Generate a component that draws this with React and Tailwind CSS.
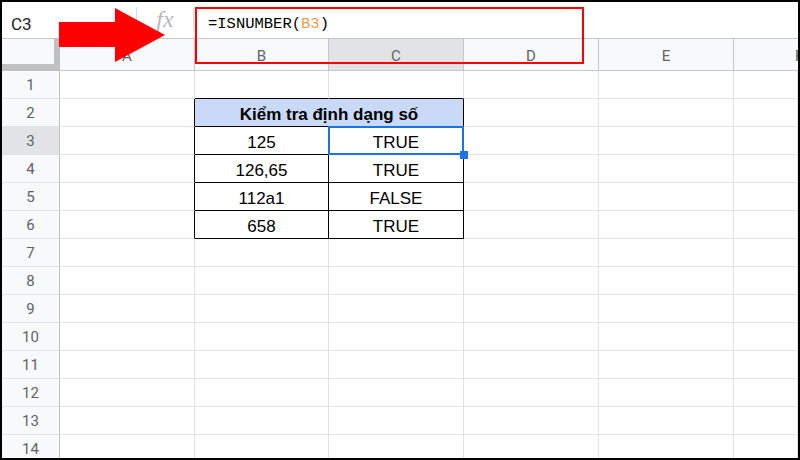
const cols = [
  { key: "A", w: "w-[135px]" },
  { key: "B", w: "w-[134px]" },
  { key: "C", w: "w-[135px]" },
  { key: "D", w: "w-[135px]" },
  { key: "E", w: "w-[135px]" },
];

const values = {
  3: ["125", "TRUE"],
  4: ["126,65", "TRUE"],
  5: ["112a1", "FALSE"],
  6: ["658", "TRUE"],
};

const rows = Array.from({ length: 14 }, (_, i) => i + 1);

function Cell({ w, right, bottom, children, selected, className = "" }) {
  return (
    <div
      className={`relative shrink-0 h-full border-r border-b flex items-center justify-center pt-[5px] font-['Liberation_Sans',Arial,sans-serif] text-[17px] text-black ${w} ${
        right ? "border-r-black" : "border-r-[#e2e2e2]"
      } ${bottom ? "border-b-black" : "border-b-[#e2e2e2]"} ${className}`}
    >
      {children}
      {selected && (
        <>
          <div className="absolute -left-px -top-px -right-px -bottom-px border-2 border-[#1a73e8]" />
          <div className="absolute -right-[5px] -bottom-[5px] w-2 h-2 bg-[#1a73e8] z-10" />
        </>
      )}
    </div>
  );
}

function Row({ r }) {
  const inTable = r >= 2 && r <= 6;
  const active = r === 3;
  return (
    <div className="flex h-[28px]">
      <div
        className={`w-[58px] shrink-0 h-full border-r border-b border-r-[#c0c0c0] border-b-[#e2e2e2] flex items-center justify-center pt-[2px] font-['Roboto',sans-serif] text-[15px] text-[#5f6368] ${
          active ? "bg-[#e1e3e6]" : "bg-[#f8f9fa]"
        }`}
      >
        {r}
      </div>
      <Cell w="w-[135px]" right={inTable} />
      {r === 2 ? (
        <Cell w="w-[269px]" right bottom className="bg-[#c9daf8] font-bold">
          Kiểm tra định dạng số
        </Cell>
      ) : (
        <>
          <Cell w="w-[134px]" right={inTable} bottom={r <= 6}>
            {values[r]?.[0]}
          </Cell>
          <Cell w="w-[135px]" right={inTable} bottom={r <= 6} selected={r === 3}>
            {values[r]?.[1]}
          </Cell>
        </>
      )}
      <Cell w="w-[135px]" />
      <Cell w="w-[135px]" />
      <Cell w="flex-1" />
    </div>
  );
}

export default function App() {
  return (
    <div className="relative w-[800px] h-[460px] overflow-hidden bg-white border-2 border-black">
      {/* formula bar */}
      <div className="flex items-center h-[37px] border-b border-[#c7c7c7] bg-white">
        <div className="w-[134px] shrink-0 pl-[9px] pt-[10px] font-['Roboto',sans-serif] text-[17px] text-[#202124]">
          C3
        </div>
        <div className="w-px h-[22px] bg-[#dadce0] -mt-[4px]" />
        <div className="w-[56px] shrink-0 flex justify-center -mt-[2px] font-['Liberation_Serif',serif] italic text-[24px] text-[#b8b8b8]">
          fx
        </div>
        <div className="w-px h-[22px] bg-[#dadce0]" />
        <div className="pl-[14px] pt-[9px] font-['Liberation_Mono',monospace] text-[15.5px] text-black">
          =ISNUMBER(<span className="text-[#f29b4b]">B3</span>)
        </div>
      </div>

      {/* column headers */}
      <div className="flex h-[32px] bg-[#f8f9fa]">
        <div className="w-[58px] shrink-0 h-full border-r-[6px] border-b-[7px] border-[#c0c0c0]" />
        {cols.map((c) => (
          <div
            key={c.key}
            className={`${c.w} shrink-0 h-full border-r border-b border-[#c7c7c7] flex items-center justify-center pt-[4px] font-['Roboto',sans-serif] text-[15px] text-[#5f6368] ${
              c.key === "C" ? "bg-[#e1e3e6]" : ""
            }`}
          >
            {c.key}
          </div>
        ))}
        <div className="flex-1 h-full border-b border-[#c7c7c7] flex items-center pl-[61px] pt-[4px] font-['Roboto',sans-serif] text-[15px] text-[#5f6368]">
          F
        </div>
      </div>

      {rows.map((r) => (
        <Row key={r} r={r} />
      ))}

      {/* callout box around the formula */}
      <div className="absolute left-[193px] top-[5px] w-[389px] h-[57px] border-2 border-[#f00]" />

      {/* red arrow */}
      <svg className="absolute left-[57px] top-[6px]" width="106" height="54" viewBox="0 0 106 54">
        <polygon points="0,14 56,14 56,0 106,27 56,54 56,39 0,39" fill="#f00" />
      </svg>
    </div>
  );
}
